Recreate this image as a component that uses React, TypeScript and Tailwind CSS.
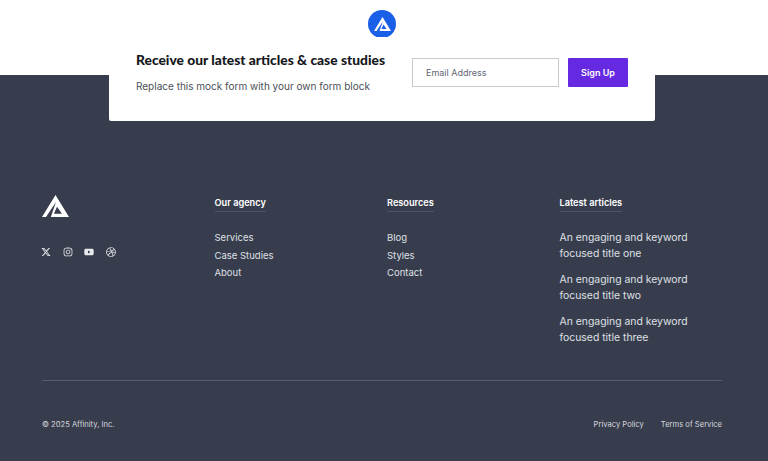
import { FaXTwitter, FaYoutube, FaDribbble } from 'react-icons/fa6'
import { FaInstagram } from 'react-icons/fa'

const body = "font-['Inter',sans-serif]"

function Logo({ className }: { className: string }) {
  return (
    <svg viewBox="0 0 27 22" className={className} fill="currentColor">
      <path
        fillRule="evenodd"
        d="M13.5 0 L27 22 H8.8 L14 7 L4 22 H0 Z M15 11.8 L11.9 18.8 H20 Z"
      />
    </svg>
  )
}

function LinkColumn({ title, links }: { title: string; links: string[] }) {
  return (
    <div>
      <h4 className="w-fit border-b border-[#4e5467] pb-[1px] pt-[1px] text-[9.2px] leading-[14px] font-semibold text-white">
        {title}
      </h4>
      <ul className="mt-[18px] flex flex-col gap-[2.7px] text-[9.5px] leading-[15px] text-[#dfe0e4]">
        {links.map((l) => (
          <li key={l}>{l}</li>
        ))}
      </ul>
    </div>
  )
}

export default function App() {
  return (
    <div className={`${body} h-[461px] w-[768px] overflow-hidden bg-[#383d4e]`}>
      <section className="h-[75px] bg-white pr-[4px]">
        <div className="flex justify-center pt-[10px]">
          <div className="flex h-[28px] w-[28px] items-center justify-center rounded-full bg-[#1a5fe8] text-white">
            <Logo className="h-[14px] w-[17px]" />
          </div>
        </div>
        <div className="relative z-10 mx-[109px] mt-[-1px] flex h-[84px] items-start justify-between rounded-b-[2px] bg-white px-[27px] pt-[12px]">
          <div>
            <h3 className="font-['Lato',sans-serif] text-[13.8px] leading-[22px] font-black text-[#15171c]">
              Receive our latest articles &amp; case studies
            </h3>
            <p className="mt-[7px] text-[10px] leading-[16px] text-[#4b4f58]">
              Replace this mock form with your own form block
            </p>
          </div>
          <form className="flex gap-[9px] pt-[9px]">
            <input
              placeholder="Email Address"
              className="h-[29px] w-[147px] border border-[#c9cacd] px-[13px] text-[9px] text-[#555] outline-none placeholder:text-[#636675]"
            />
            <button type="button" className="h-[29px] w-[60px] rounded-[1px] bg-[#6429e0] text-[9px] font-semibold text-white">
              Sign Up
            </button>
          </form>
        </div>
      </section>

      <footer className="pl-[42px] pr-[46px] pt-[120px]">
        <div className="grid grid-cols-4 gap-x-[10px]">
          <div>
            <Logo className="h-[22px] w-[27px] text-white" />
            <div className="mt-[30px] flex items-center gap-[11.7px] text-[#e8e9ec]">
              <FaXTwitter className="h-[10px] w-[10px] -ml-px" />
              <FaInstagram className="h-[10px] w-[10px]" />
              <FaYoutube className="h-[10px] w-[10px]" />
              <FaDribbble className="h-[10px] w-[10px]" />
            </div>
          </div>
          <LinkColumn title="Our agency" links={['Services', 'Case Studies', 'About']} />
          <LinkColumn title="Resources" links={['Blog', 'Styles', 'Contact']} />
          <div>
            <h4 className="w-fit border-b border-[#4e5467] pb-[1px] pt-[1px] text-[9.2px] leading-[14px] font-semibold text-white">
              Latest articles
            </h4>
            <ul className="mt-[18px] flex flex-col gap-[10.8px] text-[10.4px] leading-[15.6px] text-[#dfe0e4]">
              <li>An engaging and keyword<br />focused title one</li>
              <li>An engaging and keyword<br />focused title two</li>
              <li>An engaging and keyword<br />focused title three</li>
            </ul>
          </div>
        </div>
        <div className="mt-[35px] flex items-center justify-between border-t border-[#565b6d] pt-[37px] text-[7.6px] leading-[13px] text-[#d5d6db]">
          <span>© 2025 Affinity, Inc.</span>
          <div className="flex gap-[17px]">
            <span>Privacy Policy</span>
            <span>Terms of Service</span>
          </div>
        </div>
      </footer>
    </div>
  )
}
